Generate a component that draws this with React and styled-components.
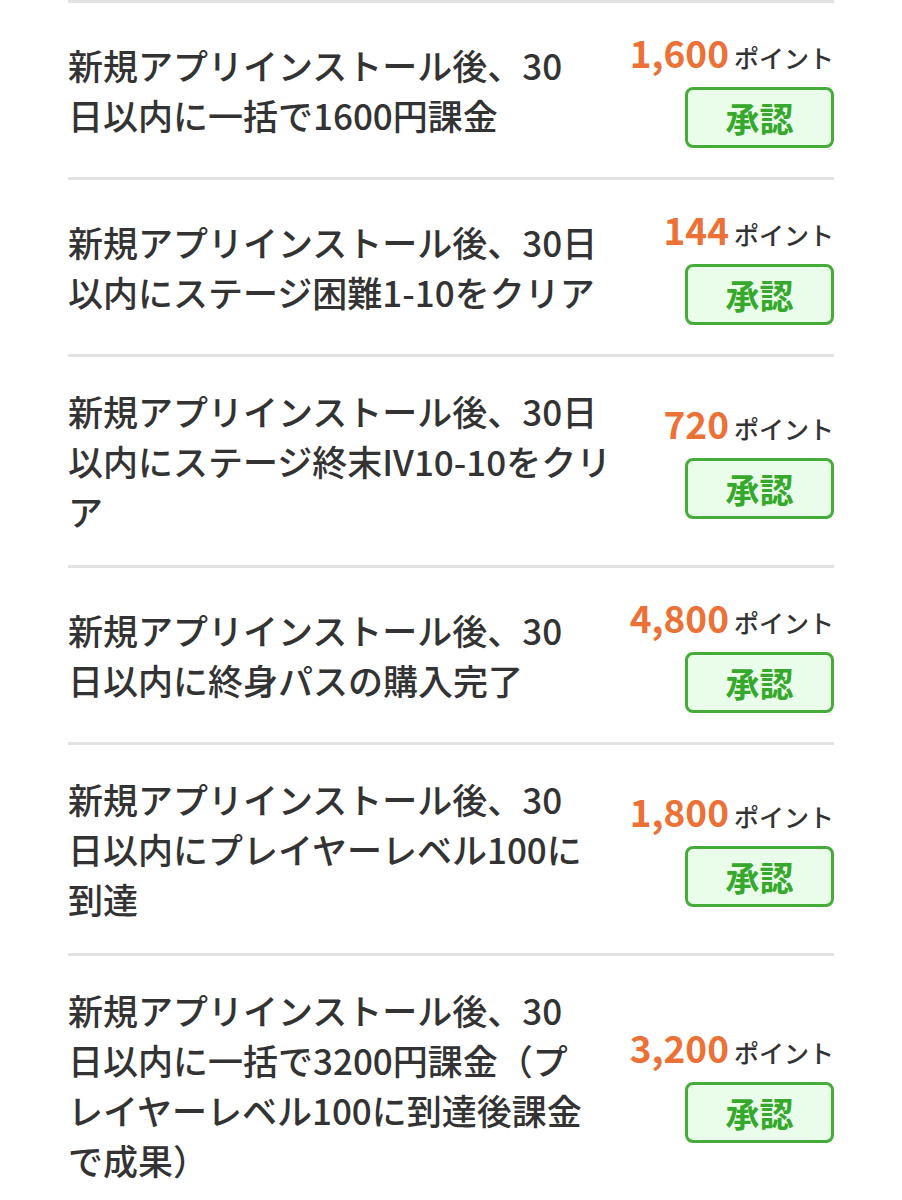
import React from 'react';
import styled, { createGlobalStyle } from 'styled-components';

const GlobalStyle = createGlobalStyle`
  body {
    margin: 0;
    background: #fff;
    font-family: "Noto Sans CJK JP", "Noto Sans", sans-serif;
  }
`;

const tasks = [
  { id: 1, title: '新規アプリインストール後、30日以内に一括で1600円課金', points: '1,600' },
  { id: 2, title: '新規アプリインストール後、30日以内にステージ困難1-10をクリア', points: '144' },
  { id: 3, title: '新規アプリインストール後、30日以内にステージ終末IV10-10をクリア', points: '720' },
  { id: 4, title: '新規アプリインストール後、30日以内に終身パスの購入完了', points: '4,800' },
  { id: 5, title: '新規アプリインストール後、30日以内にプレイヤーレベル100に到達', points: '1,800' },
  { id: 6, title: '新規アプリインストール後、30日以内に一括で3200円課金（プレイヤーレベル100に到達後課金で成果）', points: '3,200' },
];

const Task = ({ title, points }) => (
  <Row>
    <Title>{title}</Title>
    <Side>
      <Reward>
        <Amount>{points}</Amount>
        <Unit>ポイント</Unit>
      </Reward>
      <Status>承認</Status>
    </Side>
  </Row>
);

const App = () => (
  <>
    <GlobalStyle />
    <List>
      {tasks.map((t) => (
        <Task key={t.id} {...t} />
      ))}
    </List>
  </>
);

const List = styled.ul`
  list-style: none;
  margin: 0;
  padding: 0 68px 0 68px;
`;

const Row = styled.li`
  display: flex;
  align-items: center;
  gap: 40px;
  padding: 29px 0;
  border-top: 3px solid #e2e2e2;
`;

const Title = styled.p`
  flex: 1;
  margin: 0;
  font-size: 35px;
  line-height: 50px;
  font-weight: 500;
  color: #333;
`;

const Side = styled.div`
  display: flex;
  flex-direction: column;
  align-items: flex-end;
  gap: 15px;
`;

const Reward = styled.div`
  display: flex;
  align-items: baseline;
  gap: 5px;
  white-space: nowrap;
`;

const Amount = styled.span`
  font-size: 37px;
  line-height: 40px;
  font-weight: 700;
  color: #eb7136;
`;

const Unit = styled.span`
  font-size: 25px;
  line-height: 30px;
  font-weight: 500;
  color: #333;
`;

const Status = styled.div`
  width: 149px;
  height: 61px;
  box-sizing: border-box;
  display: flex;
  align-items: center;
  justify-content: center;
  border: 3px solid #45ac39;
  border-radius: 8px;
  background: #eafcea;
  color: #36a82c;
  font-size: 34px;
  font-weight: 700;
`;

export default App;
